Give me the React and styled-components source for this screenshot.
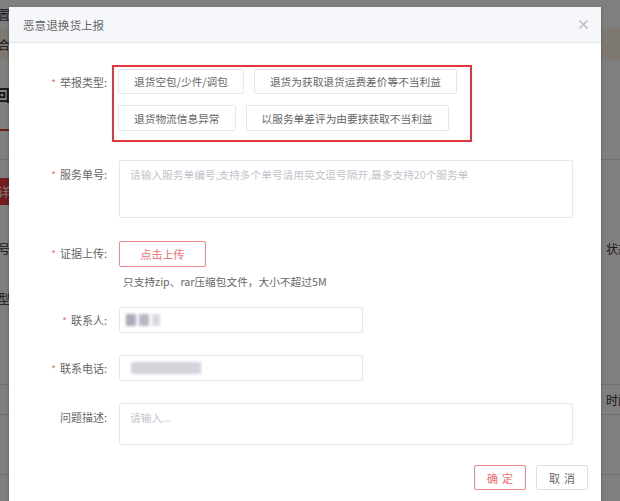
import React from 'react';
import styled, { createGlobalStyle } from 'styled-components';

const GlobalStyle = createGlobalStyle`
  html, body {
    margin: 0;
    padding: 0;
  }
  body {
    width: 620px;
    height: 501px;
    overflow: hidden;
    background: #fff;
    font-family: "Noto Sans CJK SC", "Noto Sans", sans-serif;
  }
  * {
    box-sizing: border-box;
  }
`;

const Screen = styled.div`
  position: relative;
  width: 620px;
  height: 501px;
  overflow: hidden;
`;

/* page behind the dialog, only its edges show */
const Page = styled.div`
  display: flex;
  flex-direction: column;
  width: 620px;
  height: 501px;
  background: #fff;
`;

const PageRow = styled.div`
  display: flex;
  justify-content: space-between;
  align-items: center;
  flex-shrink: 0;
  height: ${({ h }) => h}px;
  background: ${({ bg }) => bg || 'transparent'};
  border-bottom: ${({ line }) => (line ? '1px solid #ddd' : 'none')};
`;

const Edge = styled.div`
  display: flex;
  justify-content: ${({ side }) => (side === 'left' ? 'flex-end' : 'flex-start')};
  width: 20px;
  overflow: hidden;
  white-space: nowrap;
  font-size: ${({ size }) => size || 12}px;
  font-weight: ${({ bold }) => (bold ? 700 : 400)};
  color: #333;
  margin-left: ${({ side }) => (side === 'left' ? '-10px' : 0)};
  margin-right: ${({ side }) => (side === 'right' ? '-6px' : 0)};
`;

const RedTab = styled.div`
  width: 30px;
  height: 2px;
  margin-left: -10px;
  background: #e4393c;
`;

const RedBtn = styled.div`
  width: 40px;
  height: 27px;
  margin-left: -30px;
  background: #e4393c;
  color: #fff;
  font-size: 12px;
  line-height: 27px;
  text-align: right;
`;

const Mask = styled.div`
  position: absolute;
  inset: 0;
  background: rgba(0, 0, 0, 0.5);
`;

const Dialog = styled.div`
  position: absolute;
  left: 9px;
  top: 7px;
  width: 592px;
  height: 520px;
  background: #fff;
  box-shadow: 0 1px 3px rgba(0, 0, 0, 0.3);
`;

const Header = styled.div`
  display: flex;
  align-items: center;
  justify-content: space-between;
  height: 36px;
  padding: 0 13px 0 14px;
  background: #f5f7fa;
  border-bottom: 1px solid #e4e7ed;
`;

const Title = styled.div`
  font-size: 11.6px;
  color: #666;
`;

const Close = styled.button`
  display: flex;
  padding: 0;
  border: none;
  background: none;
  color: #b0b3b8;
`;

const Body = styled.div`
  padding-top: 22px;
`;

const FormItem = styled.div`
  display: grid;
  grid-template-columns: 98px 1fr;
  column-gap: 12px;
  margin-bottom: ${({ mb }) => mb}px;
`;

const Label = styled.div`
  text-align: right;
  font-size: 11px;
  color: #666;
  line-height: ${({ lh }) => lh || 26}px;
  padding-top: ${({ pt }) => pt || 0}px;
  white-space: nowrap;
`;

const Star = styled.span`
  color: #f56c6c;
  margin-right: 4px;
  font-size: 10px;
`;

const TypeBox = styled.div`
  display: flex;
  flex-direction: column;
  gap: 11px;
  width: 360px;
  margin-left: -7px;
  padding: 2px 4px 9px 4px;
  border: 2px solid #e0373e;
`;

const TypeRow = styled.div`
  display: flex;
  gap: 10px;
`;

const TypeButton = styled.button`
  height: ${({ h }) => h || 25}px;
  padding: 0 15px;
  border: 1px solid #e6e7ea;
  border-radius: 2px;
  background: #fff;
  font-family: inherit;
  font-size: 10.7px;
  color: #666;
  white-space: nowrap;
`;

const TextArea = styled.textarea`
  display: block;
  width: 454px;
  height: ${({ h }) => h}px;
  padding: 6px 10px;
  border: 1px solid #e4e7ed;
  border-radius: 2px;
  resize: none;
  font-family: inherit;
  font-size: 10.7px;
  line-height: 16px;
  color: #666;
  &::placeholder {
    color: #c0c4cc;
  }
`;

const UploadButton = styled.button`
  width: 87px;
  height: 26px;
  border: 1px solid #f3858b;
  border-radius: 2px;
  background: #fff;
  font-family: inherit;
  font-size: 11px;
  color: #f56c6c;
`;

const Hint = styled.div`
  margin-top: 6px;
  margin-left: 4px;
  font-size: 10.7px;
  line-height: 18px;
  color: #666;
`;

const InputBox = styled.div`
  display: flex;
  align-items: center;
  gap: 3px;
  width: 244px;
  height: 26px;
  padding-left: ${({ pl }) => pl}px;
  border: 1px solid #e4e7ed;
  border-radius: 2px;
`;

const Blur = styled.span`
  display: block;
  width: ${({ w }) => w}px;
  height: 12px;
  background: ${({ c }) => c};
  filter: blur(1.6px);
`;

const Footer = styled.div`
  display: flex;
  justify-content: flex-end;
  gap: 10px;
  padding-right: 13px;
`;

const FooterButton = styled.button`
  width: 52px;
  height: 25px;
  padding: 0 0 0 4px;
  border: 1px solid ${({ primary }) => (primary ? '#f0858a' : '#dcdfe6')};
  border-radius: 2px;
  background: #fff;
  font-family: inherit;
  font-size: 11px;
  letter-spacing: 4px;
  color: ${({ primary }) => (primary ? '#f56c6c' : '#666')};
`;

const types = [
  ['退货空包/少件/调包', '退货为获取退货运费差价等不当利益'],
  ['退货物流信息异常', '以服务单差评为由要挟获取不当利益'],
];

export default function App() {
  return (
    <Screen>
      <GlobalStyle />
      <Page>
        <PageRow h={28}>
          <Edge side="left">设置</Edge>
          <Edge side="right" />
        </PageRow>
        <PageRow h={32} bg="#fbf3e2">
          <Edge side="left">符合</Edge>
          <Edge side="right" />
        </PageRow>
        <PageRow h={68}>
          <Edge side="left" size={16} bold>
            退回
          </Edge>
        </PageRow>
        <PageRow h={4}>
          <RedTab />
        </PageRow>
        <PageRow h={28} line />
        <PageRow h={63}>
          <RedBtn>详</RedBtn>
        </PageRow>
        <PageRow h={50}>
          <Edge side="left">编号</Edge>
          <Edge side="right">状态</Edge>
        </PageRow>
        <PageRow h={50}>
          <Edge side="left">类型</Edge>
        </PageRow>
        <PageRow h={62} line />
        <PageRow h={30} line>
          <span />
          <Edge side="right">时间</Edge>
        </PageRow>
        <PageRow h={60} line />
      </Page>
      <Mask />
      <Dialog>
        <Header>
          <Title>恶意退换货上报</Title>
          <Close aria-label="关闭">
            <svg width="9" height="9" viewBox="0 0 9 9" fill="none" stroke="currentColor" strokeWidth="1.1">
              <path d="M0.5 0.5 L8.5 8.5 M8.5 0.5 L0.5 8.5" />
            </svg>
          </Close>
        </Header>
        <Body>
          <FormItem mb={18}>
            <Label pt={4}>
              <Star>*</Star>举报类型:
            </Label>
            <TypeBox>
              {types.map((row, i) => (
                <TypeRow key={i}>
                  {row.map((t) => (
                    <TypeButton key={t} h={i === 0 ? 25 : 26}>
                      {t}
                    </TypeButton>
                  ))}
                </TypeRow>
              ))}
            </TypeBox>
          </FormItem>

          <FormItem mb={22}>
            <Label lh={28}>
              <Star>*</Star>服务单号:
            </Label>
            <TextArea h={58} placeholder="请输入服务单编号,支持多个单号请用英文逗号隔开,最多支持20个服务单" />
          </FormItem>

          <FormItem mb={16}>
            <Label>
              <Star>*</Star>证据上传:
            </Label>
            <div>
              <UploadButton>点击上传</UploadButton>
              <Hint>只支持zip、rar压缩包文件，大小不超过5M</Hint>
            </div>
          </FormItem>

          <FormItem mb={21}>
            <Label>
              <Star>*</Star>联系人:
            </Label>
            <InputBox pl={6}>
              <Blur w={10} c="#a9aab8" />
              <Blur w={10} c="#b5b6c0" />
              <Blur w={8} c="#d8d8de" />
            </InputBox>
          </FormItem>

          <FormItem mb={21}>
            <Label>
              <Star>*</Star>联系电话:
            </Label>
            <InputBox pl={11}>
              <Blur w={70} c="#d3d3dc" />
            </InputBox>
          </FormItem>

          <FormItem mb={20}>
            <Label lh={28}>问题描述:</Label>
            <TextArea h={42} placeholder="请输入..." />
          </FormItem>

          <Footer>
            <FooterButton primary>确定</FooterButton>
            <FooterButton>取消</FooterButton>
          </Footer>
        </Body>
      </Dialog>
    </Screen>
  );
}
